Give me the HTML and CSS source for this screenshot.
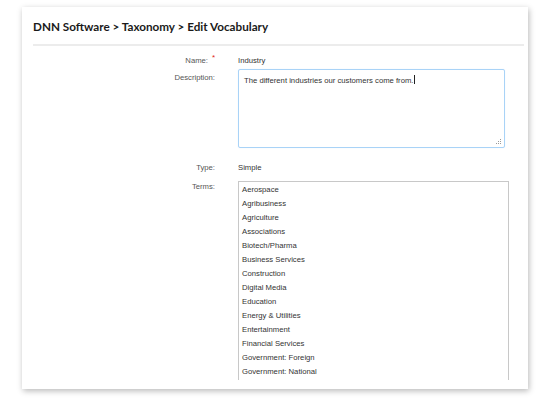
FILE: index.html
```
<!DOCTYPE html>
<html>
<head>
<meta charset="utf-8">
<link rel="stylesheet" href="styles.css">
</head>
<body>
<div class="card">
  <h1 class="title">DNN Software &gt; Taxonomy &gt; Edit Vocabulary</h1>
  <div class="body">
    <div class="row row-name">
      <div class="label">Name:<span class="req">*</span></div>
      <div class="value">Industry</div>
    </div>
    <div class="row row-desc">
      <div class="label">Description:</div>
      <div class="textarea">The different industries our customers come from.<span class="caret"></span>
        <svg class="grip" width="7" height="7" viewBox="0 0 7 7">
          <rect x="5" y="1" width="1" height="1" fill="#9a9a9a"/>
          <rect x="3" y="3" width="1" height="1" fill="#9a9a9a"/>
          <rect x="5" y="3" width="1" height="1" fill="#9a9a9a"/>
          <rect x="1" y="5" width="1" height="1" fill="#9a9a9a"/>
          <rect x="3" y="5" width="1" height="1" fill="#9a9a9a"/>
          <rect x="5" y="5" width="1" height="1" fill="#9a9a9a"/>
        </svg>
      </div>
    </div>
    <div class="row row-type">
      <div class="label">Type:</div>
      <div class="value">Simple</div>
    </div>
    <div class="row row-terms">
      <div class="label">Terms:</div>
      <ul class="terms">
        <li>Aerospace</li>
        <li>Agribusiness</li>
        <li>Agriculture</li>
        <li>Associations</li>
        <li>Biotech/Pharma</li>
        <li>Business Services</li>
        <li>Construction</li>
        <li>Digital Media</li>
        <li>Education</li>
        <li>Energy &amp; Utilities</li>
        <li>Entertainment</li>
        <li>Financial Services</li>
        <li>Government: Foreign</li>
        <li>Government: National</li>
      </ul>
    </div>
  </div>
</div>
</body>
</html>
```
FILE: styles.css
```
html, body {
  margin: 0;
  padding: 0;
  background: #ffffff;
}
body {
  width: 550px;
  height: 405px;
  overflow: hidden;
  font-family: "Liberation Sans", Arial, sans-serif;
}
.card {
  margin: 7px 0 0 22px;
  width: 506px;
  height: 382px;
  box-sizing: border-box;
  background: #fff;
  box-shadow: 1px 2px 6px rgba(0, 0, 0, 0.28);
  padding: 0 4px 9px 11px;
  display: flex;
  flex-direction: column;
}
.title {
  margin: 0;
  padding: 11px 0 10px 0;
  font-family: Lato, "Open Sans", sans-serif;
  font-weight: 700;
  font-size: 11.7px;
  line-height: 16px;
  color: #1a1a1a;
  border-bottom: 2px solid #ececec;
}
.body {
  flex: 1;
  overflow: hidden;
  padding-top: 7px;
}
.row {
  display: flex;
  align-items: flex-start;
}
.label {
  width: 182px;
  flex: none;
  text-align: right;
  font-size: 7.7px;
  line-height: 10px;
  color: #555;
  padding-right: 23px;
  box-sizing: content-box;
  position: relative;
}
.req {
  color: #e0261b;
  font-size: 8px;
  position: absolute;
  right: 23px;
  top: -3px;
}
.row-name .label {
  padding-right: 30px;
  width: 175px;
}
.value {
  font-size: 7.7px;
  line-height: 10px;
  color: #333;
}
.row-name {
  height: 16px;
  align-items: center;
}
.row-desc .label {
  padding-top: 4px;
}
.textarea {
  position: relative;
  width: 267px;
  height: 79px;
  box-sizing: border-box;
  border: 1px solid #a9d3f7;
  border-radius: 2px;
  box-shadow: 0 0 1px #cfe6fb;
  padding: 5px 5px;
  font-size: 7.7px;
  line-height: 10px;
  color: #333;
}
.caret {
  display: inline-block;
  width: 1px;
  height: 9px;
  background: #222;
  vertical-align: -1px;
  margin-left: 1px;
}
.grip {
  position: absolute;
  right: 2px;
  bottom: 2px;
}
.row-type {
  margin-top: 15px;
  height: 10px;
}
.row-terms {
  margin-top: 8px;
}
.row-terms .label {
  padding-top: 1px;
}
.terms {
  list-style: none;
  margin: 0;
  padding: 1px 3px;
  width: 271px;
  height: 230px;
  box-sizing: border-box;
  border: 1px solid #c8c8c8;
  border-bottom: none;
}
.terms li {
  font-size: 7.7px;
  line-height: 14px;
  height: 14px;
  color: #333;
}
```
